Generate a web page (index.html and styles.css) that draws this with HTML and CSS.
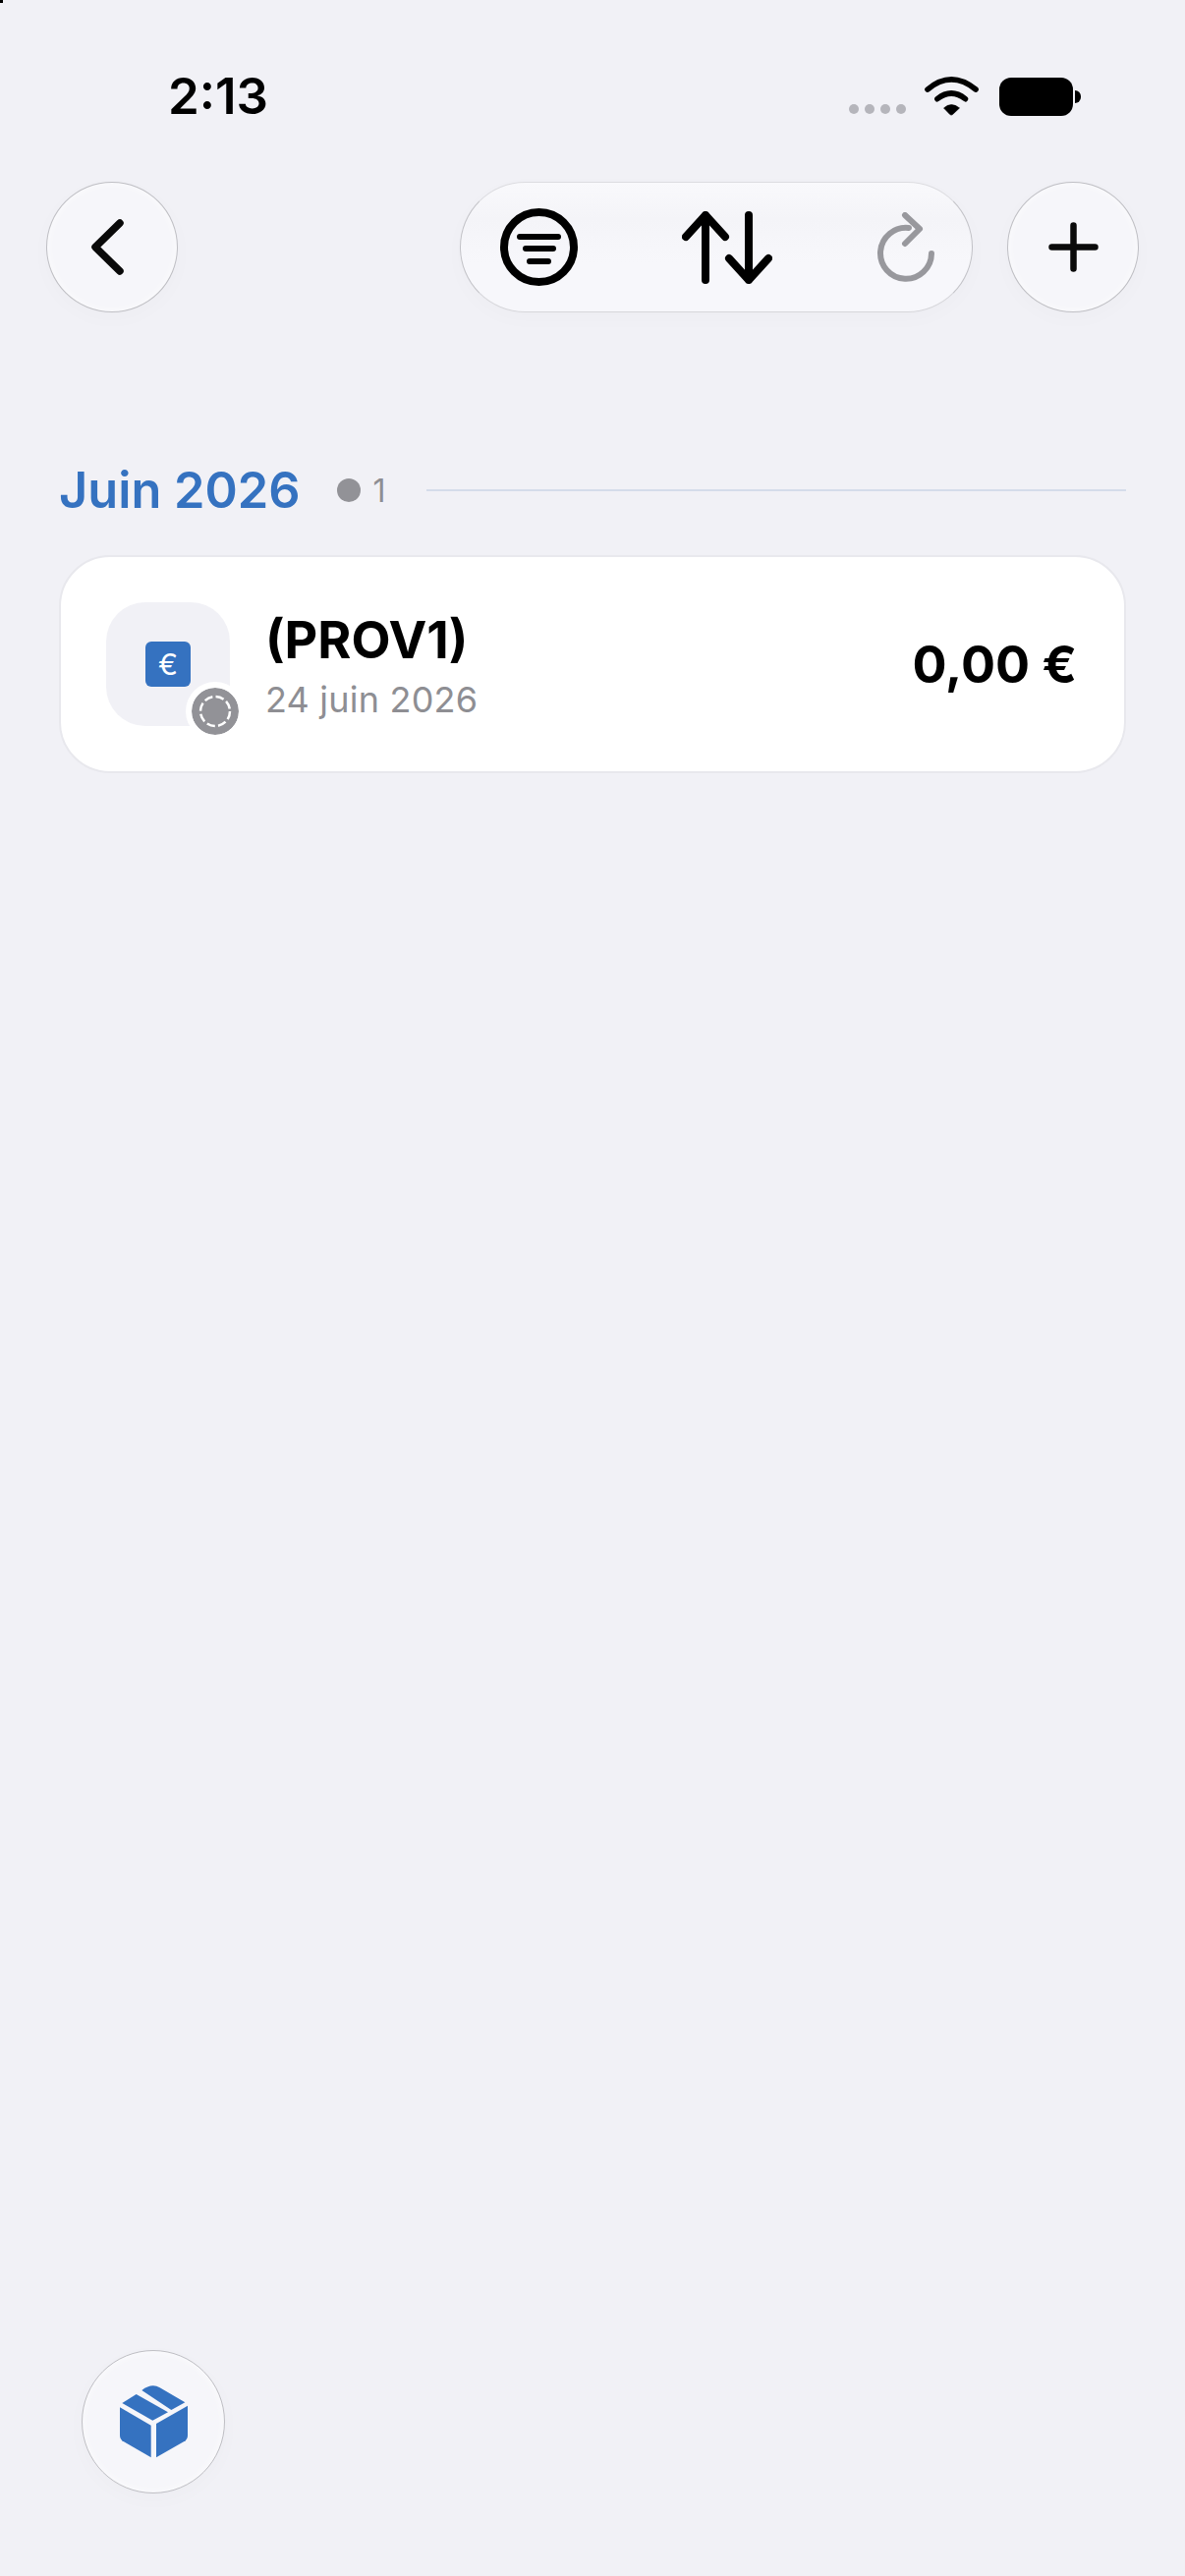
FILE: index.html
```html
<!DOCTYPE html>
<html lang="fr">
<head>
  <meta charset="UTF-8">
  <meta name="viewport" content="width=device-width, initial-scale=1.0">
  <title>Juin 2026</title>
  <link rel="stylesheet" href="styles.css">
</head>
<body>
  <div class="page">
    <header class="status">
      <span class="time">2:13</span>
      <div class="status-icons">
        <div class="signal"><i></i><i></i><i></i><i></i></div>
        <svg class="wifi" viewBox="300 45 175 135">
          <path d="M312 93Q385 32 460 93M342 122Q385 88 428 122" fill="none" stroke="#000" stroke-width="17" stroke-linecap="round"/>
          <path d="M362 150Q385 130 410 150L389 170Q385 173 381 170Z" fill="#000" stroke="#000" stroke-width="2" stroke-linejoin="round"/>
        </svg>
        <div class="battery"></div>
      </div>
    </header>

    <nav class="toolbar">
      <button class="round-btn">
        <svg class="ico-back" viewBox="0 0 33 57"><path d="M29 4L4 28.500L29 53" fill="none" stroke="#0a0a0a" stroke-width="7.500" stroke-linecap="round" stroke-linejoin="round"/></svg>
      </button>
      <div class="pill">
        <svg class="ico-filter" viewBox="0 0 79 79">
          <circle cx="39.500" cy="39.500" r="35.500" fill="none" stroke="#000" stroke-width="8"/>
          <path d="M20 29H59M26 41H54M30 54H49" fill="none" stroke="#000" stroke-width="6" stroke-linecap="round"/>
        </svg>
        <svg class="ico-sort" viewBox="0 0 92 74">
          <path d="M24 70V4M4 26L24 4L44 26M68 4V70M48 48L68 70L88 48" fill="none" stroke="#000" stroke-width="8" stroke-linecap="round" stroke-linejoin="round"/>
        </svg>
        <svg class="ico-redo" viewBox="0 0 60 72">
          <path d="M56 42A26 26 0 1 1 33 16" fill="none" stroke="#98989d" stroke-width="6" stroke-linecap="round"/>
          <path d="M29 3L44 17L29 32" fill="none" stroke="#98989d" stroke-width="6" stroke-linecap="round" stroke-linejoin="round"/>
        </svg>
      </div>
      <button class="round-btn">
        <svg class="ico-plus" viewBox="0 0 51 51"><path d="M25.500 3.500V47.500M3.500 25.500H47.500" fill="none" stroke="#0a0a0a" stroke-width="6.500" stroke-linecap="round"/></svg>
      </button>
    </nav>

    <main class="month">
      <div class="month-head">
        <h2 class="month-title">Juin 2026</h2>
        <span class="count-dot"></span>
        <span class="count">1</span>
        <span class="month-line"></span>
      </div>
      <article class="card">
        <div class="tile">
          <span class="euro-box">€</span>
          <span class="badge">
            <svg viewBox="0 0 48 48"><circle cx="24" cy="24" r="15" fill="none" stroke="#fff" stroke-width="2.500" stroke-dasharray="8.500 3.300"/></svg>
          </span>
        </div>
        <div class="card-text">
          <div class="card-title">(PROV1)</div>
          <div class="card-date">24 juin 2026</div>
        </div>
        <div class="amount">0,00 €</div>
      </article>
    </main>

    <button class="round-btn fab">
      <svg class="ico-box" viewBox="183 178 207 222">
        <path d="M183 245L278 300V398L195 350Q183 343 183 330Z" fill="#3572c0"/>
        <path d="M390 240L294 295V398L378 350Q390 343 390 330Z" fill="#3572c0"/>
        <path d="M190 232L233 205L330 260L283 285Z" fill="#3572c0"/>
        <path d="M250 193Q280 170 305 185L382 230L340 253Z" fill="#3572c0"/>
      </svg>
    </button>
  </div>
</body>
</html>
```

FILE: styles.css
```css
* { box-sizing: border-box; }
body { margin: 0; background: #f1f1f6; color: #000; font-family: Inter, "Noto Sans", sans-serif; }
body::before { content: ""; position: absolute; left: 0; top: 0; width: 3px; height: 3px; background: #000; }
.page { display: flex; flex-direction: column; height: 100vh; overflow: hidden; }

.status { display: flex; align-items: center; justify-content: space-between; height: 60px; margin-top: 68px; padding: 0 106px 0 171px; }
.time { font-size: 51px; font-weight: 600; line-height: 60px; }
.status-icons { display: flex; align-items: center; }
.signal { display: flex; gap: 6px; margin: 26px 18px 0 0; }
.signal i { width: 10px; height: 10px; border-radius: 50%; background: #b5b5bb; }
.wifi { width: 58px; height: 45px; margin-right: 19px; margin-bottom: 2px; }
.battery { position: relative; width: 75px; height: 39px; border-radius: 12px; background: #000; margin-right: 8px; }
.battery::after { content: ""; position: absolute; left: 77px; top: 13px; width: 6px; height: 13px; border-radius: 0 6px 6px 0; background: #000; }

.toolbar { display: flex; align-items: center; gap: 35px; margin-top: 57px; padding: 0 47px; }
.round-btn { display: flex; align-items: center; justify-content: center; width: 134px; height: 133px; padding: 0; border: 1.5px solid #bfbfc4; border-radius: 50%; background: #f6f6fa; box-shadow: 0 6px 22px rgba(0,0,0,0.02), inset 0 0 10px rgba(255,255,255,0.7); }
.pill { display: flex; align-items: center; justify-content: space-between; width: 522px; height: 133px; margin-left: auto; padding: 0 37px 0 40px; border: 1.5px solid; border-color: #dcdce0 #c2c2c7 #d6d6da; border-radius: 67px; background: linear-gradient(#f9f9fc, #f4f4f8 28%, #f7f7fb 62%); box-shadow: 0 6px 22px rgba(0,0,0,0.02); }
.ico-back { width: 33px; height: 57px; margin-right: 9px; }
.ico-plus { width: 51px; height: 51px; }
.ico-filter { width: 79px; height: 79px; }
.ico-sort { width: 92px; height: 74px; }
.ico-redo { width: 60px; height: 72px; }

.month { margin: 151px 60px 0; }
.month-head { display: flex; align-items: center; height: 60px; }
.month-title { margin: -2px 0 0; font-size: 50.500px; font-weight: 600; color: #3572c0; }
.count-dot { width: 24px; height: 24px; margin-left: 37px; border-radius: 50%; background: #929297; }
.count { margin-left: 13px; font-size: 32px; color: #8e8e93; }
.month-line { flex: 1; height: 2px; margin-left: 41px; background: #d5dcea; }

.card { display: flex; align-items: center; height: 222px; margin-top: 36px; padding: 0 48px 0 46px; border: 2px solid #e8e8ed; border-radius: 52px; background: #fff; }
.tile { position: relative; display: flex; align-items: center; justify-content: center; width: 126px; height: 126px; border-radius: 40px; background: #f1f1f6; }
.euro-box { width: 46px; height: 46px; border-radius: 6px; background: #3572c0; color: #fff; font-size: 30px; line-height: 46px; text-align: center; }
.badge { position: absolute; left: 81px; top: 81px; display: flex; width: 60px; height: 60px; padding: 6px; border-radius: 50%; background: #929297; background-clip: content-box; box-shadow: inset 0 0 0 6px #fff; }
.badge svg { width: 48px; height: 48px; }
.card-text { margin-left: 36px; padding-top: 5px; }
.card-title { font-size: 52px; font-weight: 700; line-height: 56px; }
.card-date { margin-top: 10px; font-size: 36px; line-height: 44px; letter-spacing: 0.2px; color: #8e8e93; }
.amount { margin-left: auto; font-size: 52px; font-weight: 700; }

.fab { width: 146px; height: 146px; margin: auto 0 84px 83px; }
.ico-box { width: 69px; height: 74px; }
```
